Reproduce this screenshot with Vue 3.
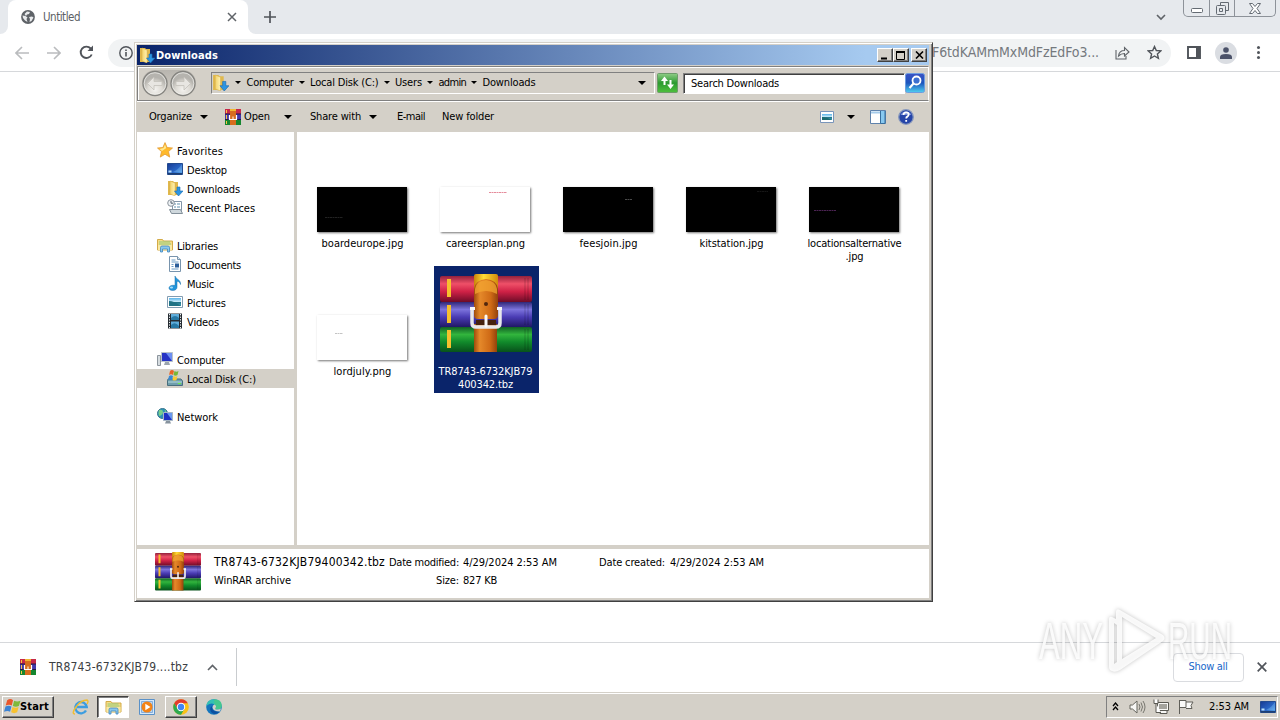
<template>
  <div class="screen">
    <svg class="defs" width="0" height="0" aria-hidden="true">
      <defs>
        <linearGradient id="gRed" x2="0" y2="1"><stop offset="0" stop-color="#93213c" /><stop offset=".3" stop-color="#ef5068" /><stop offset=".6" stop-color="#cf2146" /><stop offset="1" stop-color="#6d0c28" /></linearGradient>
        <linearGradient id="gBlue" x2="0" y2="1"><stop offset="0" stop-color="#302878" /><stop offset=".3" stop-color="#7c73dc" /><stop offset=".6" stop-color="#4a3cb4" /><stop offset="1" stop-color="#211766" /></linearGradient>
        <linearGradient id="gGreen" x2="0" y2="1"><stop offset="0" stop-color="#125f25" /><stop offset=".3" stop-color="#32b53d" /><stop offset=".6" stop-color="#118a2b" /><stop offset="1" stop-color="#08511b" /></linearGradient>
        <linearGradient id="gBelt"><stop offset="0" stop-color="#a04c0c" /><stop offset=".25" stop-color="#e5892a" /><stop offset=".7" stop-color="#cf6a16" /><stop offset="1" stop-color="#93420c" /></linearGradient>
        <linearGradient id="gGold"><stop offset="0" stop-color="#c98309" /><stop offset=".4" stop-color="#ffdc36" /><stop offset="1" stop-color="#d18a0c" /></linearGradient>
        <linearGradient id="gScreen" x2="1" y2="1"><stop offset="0" stop-color="#173a92" /><stop offset=".6" stop-color="#2a68c8" /><stop offset="1" stop-color="#64b5f3" /></linearGradient>
        <linearGradient id="gFolder"><stop offset="0" stop-color="#f2d36b" /><stop offset="1" stop-color="#fff2b4" /></linearGradient>
        <linearGradient id="gSky" x2="0" y2="1"><stop offset="0" stop-color="#5ab4ea" /><stop offset=".5" stop-color="#d3f0fa" /><stop offset=".55" stop-color="#25758a" /><stop offset="1" stop-color="#3fa2b7" /></linearGradient>
        <linearGradient id="gGo" x2="0" y2="1"><stop offset="0" stop-color="#3a52c4" /><stop offset=".5" stop-color="#1d55bd" /><stop offset="1" stop-color="#4fd0f0" /></linearGradient>
        <linearGradient id="gRefresh" x2="0" y2="1"><stop offset="0" stop-color="#8fcd86" /><stop offset=".5" stop-color="#2c9a30" /><stop offset="1" stop-color="#4fc03d" /></linearGradient>
        <radialGradient id="gNav" cy=".75"><stop offset="0" stop-color="#f4f3f0" /><stop offset=".6" stop-color="#dddad4" /><stop offset="1" stop-color="#b5b3ae" /></radialGradient>
      </defs>

      <symbol id="rar" viewBox="0 0 92 79" preserveAspectRatio="none">
        <rect y="2" width="92" height="26" rx="2" fill="url(#gRed)" />
        <rect y="28" width="92" height="25" rx="2" fill="url(#gBlue)" />
        <rect y="53" width="92" height="25" rx="2" fill="url(#gGreen)" />
        <path d="M7 5h4v18H7zM7 31h4v18H7zM7 56h4v18H7z" fill="#f7c02d" />
        <path d="M85 4v22M88 4v22M85 30v21M88 30v21M85 55v21M88 55v21" stroke="#000" stroke-opacity=".2" />
        <path d="M34 50h23v28H34z" fill="url(#gBelt)" />
        <path d="M34 2q0-2 2-2h20q2 0 2 2v17H34z" fill="url(#gGold)" />
        <path d="M34 15q1-9 12-10 11 1 12 10v26q0 4-4 4H38q-4 0-4-4z" fill="url(#gBelt)" />
        <path d="M35 15q1-8 11-9 10 1 11 9v5q-11-6-22 0z" fill="#f3a531" opacity=".75" />
        <circle cx="46" cy="30" r="2" fill="#52270d" />
        <path d="M36 46h20v5H36z" fill="#46220d" />
        <path d="M32 34v15q0 4 4 4h20q4 0 4-4V34" fill="none" stroke="#e8e8ea" stroke-width="3.500" />
        <path d="M30 34.500h5M57 34.500h5" stroke="#f8f8f8" stroke-width="3" />
        <path d="M46 42v10" stroke="#f8f8f8" stroke-width="3" stroke-linecap="round" />
      </symbol>
      <symbol id="rarSmall" viewBox="0 0 16 16">
        <path d="M0 0h16v5H0z" fill="#c72848" /><path d="M0 5h16v6H0z" fill="#4338a8" /><path d="M0 11h16v5H0z" fill="#16862f" />
        <path d="M1 1h1v3H1zM1 6h1v4H1zM1 12h1v3H1z" fill="#f8c545" />
        <path d="M5 0h6v16H5z" fill="#d76c1d" /><path d="M5 0h6v2H5z" fill="#f2b632" />
        <path d="M0 5h5M11 5h5M0 10.500h5M11 10.500h5" stroke="#241747" />
        <path d="M4.500 6v4.500h7V6" fill="none" stroke="#fff" stroke-width="1.200" /><path d="M8 7.500V10" stroke="#fff" />
      </symbol>
      <symbol id="downloads" viewBox="0 0 16 16">
        <path d="M1 1h5l1 1h4v13H1z" fill="#e0b84c" /><path d="M3 1l5 2v13l-5-2z" fill="url(#gFolder)" stroke="#d5ae4b" stroke-width=".5" />
        <path d="M10 7h3v4h3l-4.500 5L7.500 11H10z" fill="#2c95e2" stroke="#1b6bb1" stroke-width=".6" />
      </symbol>
      <symbol id="star" viewBox="0 0 16 16">
        <path d="M8 .6l2.100 4.900 5.400.5-4 3.600 1.200 5.500L8 12.200l-4.700 2.900 1.200-5.500L.5 6l5.400-.5z" fill="#ffb92a" stroke="#e39a35" stroke-width=".8" />
        <path d="M8 2.500L9.300 6 5 9 2.500 7 6.500 6z" fill="#ffe98f" />
      </symbol>
      <symbol id="desktop" viewBox="0 0 16 16">
        <path d="M.5 2.500h15v11H.5z" fill="url(#gScreen)" stroke="#234b8f" /><path d="M1 12h14v1.500H1z" fill="#1d3f73" /><path d="M1.500 9.500h3v2h-3z" fill="#b9dff8" />
        <path d="M6 11Q11 9 15 3v8z" fill="#8ccaf5" opacity=".35" />
      </symbol>
      <symbol id="recent" viewBox="0 0 16 16">
        <path d="M5.500 2.500h9v9h-9z" fill="#fff" stroke="#8295a8" /><path d="M7 5h2M10 5h3M7 8h2M10 8h3" stroke="#5d8fae" />
        <circle cx="4" cy="4" r="3.300" fill="#eef2f5" stroke="#8b949d" /><path d="M4 2v2.200h2" fill="none" stroke="#4f5d6b" />
        <path d="M2.500 10.500l2 4h11l-2-4z" fill="#cfd8dd" stroke="#83909a" />
      </symbol>
      <symbol id="libraries" viewBox="0 0 16 16">
        <path d="M.5 2.500h5l1 1.500h9v9H.5z" fill="#f6dc85" stroke="#d3ab49" /><path d="M2 5h11M2 7h12" stroke="#8fc97c" />
        <path d="M1 8h14v5H1z" fill="#fae9a5" /><path d="M3.500 15v-4.500Q3.500 9 5 9h6q1.500 0 1.500 1.500V15h-2v-3h-5v3z" fill="#8ac7ed" stroke="#3d87bf" stroke-width=".8" />
      </symbol>
      <symbol id="documents" viewBox="0 0 16 16">
        <path d="M2.500.5h8l3 3v12h-11z" fill="#fff" stroke="#7894ad" /><path d="M10.500.5v3h3" fill="#d7e6f0" stroke="#7894ad" />
        <path d="M4.500 4h4M4.500 6h7M4.500 8.500h2M4.500 10.500h2M4.500 13h7" stroke="#689bc6" /><path d="M8 7.500h4v4H8z" fill="#2b5d99" />
      </symbol>
      <symbol id="music" viewBox="0 0 16 16">
        <path d="M8 1c1 3.500 6 3.500 5.500 8.500-.5-2.500-2-3-3.500-3.300V12c0 2-1.500 3.500-4.300 3.500C3.400 15.500 2 14.500 2 13c0-2 3-3.300 6-2.500V1z" fill="#2295dc" stroke="#176fa9" stroke-width=".5" />
        <ellipse cx="4.500" cy="12.500" rx="1.600" ry="1" fill="#a7def8" />
      </symbol>
      <symbol id="pictures" viewBox="0 0 16 16">
        <path d="M.5 2.500h15v11H.5z" fill="#fff" stroke="#829cb1" /><path d="M2 4h12v8H2z" fill="url(#gSky)" /><path d="M2 7q5 0 12 5H2z" fill="#207385" />
      </symbol>
      <symbol id="videos" viewBox="0 0 16 16">
        <path d="M1 .5h14v15H1z" fill="#252b31" /><path d="M4 1h8v6H4zM4 8.500h8V15H4z" fill="#5faddb" />
        <path d="M2.500 1v15M13.500 1v15" stroke="#eef4f7" stroke-dasharray="1.300 1.300" /><path d="M4 5q4-4 8 0v2H4zM4 12q4-4 8 1v2H4z" fill="#2778a4" />
      </symbol>
      <symbol id="computer" viewBox="0 0 16 16">
        <path d="M.5 4.500h3v10h-3z" fill="#d6dce0" stroke="#8c959d" /><path d="M4.500 1.500h11v9h-11z" fill="#2633c5" stroke="#b9c2ca" />
        <path d="M9 2h6v8z" fill="#6d8ff2" /><path d="M8 11h4l1 3H7z" fill="#9ba5ad" />
      </symbol>
      <symbol id="disk" viewBox="0 0 16 16">
        <path d="M1 9h13l1.500 2v4.500H.5V11z" fill="#6f9eac" stroke="#476e7d" /><path d="M1 12h14" stroke="#b7dbdf" /><path d="M11 13.500h3" stroke="#68f23c" />
        <path d="M3 1q2-2 4 0L6 5Q4 3.500 2 5z" fill="#ea6527" /><path d="M7.500 1q2 1.500 4 0l-1 4q-2 1.500-4 0z" fill="#78b736" />
        <path d="M2 6q2-1.500 4 0l-1 4q-2-1-4 0z" fill="#3988d4" /><path d="M6.500 6q2 1.500 4 0l-1 4q-2 1-4 0z" fill="#f9cb32" />
      </symbol>
      <symbol id="network" viewBox="0 0 16 16">
        <circle cx="5.500" cy="5.500" r="5" fill="#2d91b8" stroke="#35738c" /><path d="M2 2q4-1 4 2T2 8q-1-3 0-6zM8 1q-1 3 2 5" fill="#78d08b" />
        <path d="M6.500 4.500h9v8h-9z" fill="#2031c4" stroke="#a7b6c4" /><path d="M10 5h5v7z" fill="#6998ef" /><path d="M9 13h4l1 2.500H8z" fill="#87939e" />
      </symbol>
      <symbol id="windows" viewBox="0 0 16 16">
        <path d="M3 2q3-2 5.500 0L7.300 7Q5 5.500 1.600 7z" fill="#e9572b" /><path d="M9.500 2.500q3 1.500 6 0L14 7.500q-3 1.500-5.700 0z" fill="#7fb93a" />
        <path d="M1.400 8q3-1.500 5.600 0L5.700 13Q3.500 11.500 0 13z" fill="#3b83d3" /><path d="M8 8.500q3 1.500 5.700 0l-1.300 5q-3 1.500-5.700 0z" fill="#f8c22f" />
      </symbol>
    </svg>

    <section class="browser">
      <header class="tabstrip">
        <i class="edge left"></i>
        <div class="tab">
          <svg width="14" height="14" viewBox="0 0 14 14"><circle cx="7" cy="7" r="6.900" fill="#5f6368" /><path d="M1.500 5.500l3 .5 2 1.500-1 1.500 1 3-2.500-1.500-2-2.500zM6 1.500l3 .5-1 2-2 .5-1 1.500-1.500-2zM8 7l3-.5 1.500 1-2 3.500-2 1 .5-3z" fill="#e9ebed" /></svg>
          <span v-fit="37" class="tab-title">Untitled</span>
          <svg class="tab-close" width="10" height="10" viewBox="0 0 10 10"><path d="M1 1l8 8M9 1L1 9" stroke="#5f6368" stroke-width="1.500" /></svg>
        </div>
        <i class="edge right"></i>
        <svg class="new-tab" width="12" height="12" viewBox="0 0 12 12"><path d="M6 0v12M0 6h12" stroke="#50545a" stroke-width="1.700" /></svg>
        <svg class="tab-search" width="10" height="7" viewBox="0 0 10 7"><path d="M1 1l4 4 4-4" fill="none" stroke="#5f6368" stroke-width="1.600" /></svg>
        <div class="caption">
          <i><svg width="12" height="5" viewBox="0 0 12 5"><rect x=".5" y=".5" width="11" height="4" rx="1" fill="#fff" stroke="#646b73" /></svg></i>
          <i><svg width="13" height="13" viewBox="0 0 13 13"><path d="M4.500 3.500v-3h8v8h-3M.5 4.500q0-1 1-1h7q1 0 1 1v7q0 1-1 1h-7q-1 0-1-1zM3.500 6.500h3v3h-3z" fill="none" stroke="#646b73" /></svg></i>
          <i><svg width="12" height="11" viewBox="0 0 12 11"><path d="M.5.500h3L6 3.500 8.500.5h3L8 5.500l3.500 5h-3L6 7.500l-2.500 3h-3l3.500-5z" fill="#fff" stroke="#646b73" /></svg></i>
        </div>
      </header>
      <div class="toolbar">
        <svg width="14" height="14" viewBox="0 0 14 14"><path d="M14 7H1M7 1L1 7l6 6" fill="none" stroke="#babcbe" stroke-width="1.600" /></svg>
        <svg width="14" height="14" viewBox="0 0 14 14"><path d="M0 7h13M7 1l6 6-6 6" fill="none" stroke="#babcbe" stroke-width="1.600" /></svg>
        <svg width="15" height="15" viewBox="0 0 15 15"><path d="M12.700 9.500A5.700 5.700 0 1 1 11.700 3.500L13 5" fill="none" stroke="#50545a" stroke-width="1.900" /><path d="M14 .5V6H8.500z" fill="#50545a" /></svg>
        <div class="omnibox">
          <svg width="14" height="14" viewBox="0 0 14 14"><circle cx="7" cy="7" r="6.200" fill="none" stroke="#50545a" stroke-width="1.400" /><path d="M7 6v4.500M7 3.500V5" stroke="#50545a" stroke-width="1.600" /></svg>
          <span v-fit="167" class="url">F6tdKAMmMxMdFzEdFo3...</span>
          <svg width="15" height="14" viewBox="0 0 15 14"><path d="M1 4v9h10v-3M3.500 10C4 6 6 4.500 9.500 4.500V1.500L14 6 9.500 10V7.500Q6 7.500 3.500 10z" fill="none" stroke="#5f6368" stroke-width="1.100" /></svg>
          <svg class="bookmark" width="15" height="15" viewBox="0 0 15 15"><path d="M7.500 1.500l1.800 4 4.500.4-3.400 3 1 4.400-3.900-2.300-3.900 2.300 1-4.400-3.400-3 4.500-.4z" fill="none" stroke="#50545a" stroke-width="1.400" /></svg>
        </div>
        <svg class="panel" width="14" height="13" viewBox="0 0 14 13"><path d="M1 1h12v11H1z" fill="none" stroke="#50545a" stroke-width="1.900" /><path d="M9 1h4v11H9z" fill="#50545a" /></svg>
        <i class="avatar"><svg width="12" height="12" viewBox="0 0 12 12"><circle cx="6" cy="3" r="2.800" fill="#4b5269" /><path d="M0 12v-2q0-3 6-3t6 3v2z" fill="#4b5269" /></svg></i>
        <i class="kebab"></i>
      </div>
      <main class="page"></main>
      <footer class="shelf">
        <svg width="16" height="16"><use href="#rarSmall" /></svg>
        <span v-fit="139" class="shelf-name">TR8743-6732KJB79....tbz</span>
        <svg class="shelf-up" width="11" height="7" viewBox="0 0 11 7"><path d="M1 6l4.500-4.500L10 6" fill="none" stroke="#5f6368" stroke-width="1.600" /></svg>
        <i class="shelf-sep"></i>
        <button class="show-all"><span v-fit="39">Show all</span></button>
        <svg width="10" height="10" viewBox="0 0 10 10"><path d="M.7.700l8.600 8.600M9.300.700L.700 9.300" stroke="#50545a" stroke-width="1.700" /></svg>
      </footer>
    </section>

    <section class="window">
      <header class="titlebar">
        <svg width="16" height="16"><use href="#downloads" /></svg>
        <strong v-fit="62">Downloads</strong>
        <div class="win-buttons">
          <i><svg width="10" height="9" viewBox="0 0 10 9"><path d="M1 7.500h6" stroke="#000" stroke-width="2" /></svg></i>
          <i><svg width="10" height="9" viewBox="0 0 10 9"><path d="M.5 1v7.500h8V1M0 1h9" fill="none" stroke="#000" /><path d="M0 1h9" stroke="#000" stroke-width="2" /></svg></i>
          <i class="x"><svg width="9" height="8" viewBox="0 0 9 8"><path d="M1 .5l7 7M8 .5l-7 7" stroke="#000" stroke-width="1.600" /></svg></i>
        </div>
      </header>

      <nav class="navbar">
        <div class="travel">
          <svg v-for="dir in ['back', 'forward']" :key="dir" :class="dir" width="26" height="27" viewBox="0 0 26 27">
            <circle cx="13" cy="13.500" r="12" fill="url(#gNav)" stroke="#84837f" stroke-width="1.300" />
            <circle cx="13" cy="13.500" r="10.800" fill="none" stroke="#f4f3f0" stroke-width=".7" />
            <path d="M12 7l-6.500 6.500L12 20v-4.500h8v-4h-8z" fill="#e8e6e2" stroke="#c4c1bb" stroke-width=".8" />
          </svg>
        </div>
        <div class="address">
          <svg width="17" height="17"><use href="#downloads" /></svg>
          <template v-for="crumb in crumbs" :key="crumb.text">
            <i class="arrow small"></i><span v-fit="crumb.width">{{ crumb.text }}</span>
          </template>
          <i class="arrow end"></i>
        </div>
        <svg class="refresh" width="21" height="20" viewBox="0 0 21 20">
          <rect x=".5" y=".5" width="20" height="19" rx="1" fill="url(#gRefresh)" stroke="#6d9b6a" />
          <path d="M6.500 12V8H4l3.500-4.500L11 8H8.500v4zM12.500 7v4.500H10l3.500 4.500 3.500-4.500h-2.500V7z" fill="#fff" />
        </svg>
        <div class="search"><span v-fit="88">Search Downloads</span></div>
        <svg class="go" width="20" height="20" viewBox="0 0 20 20">
          <rect x=".5" y=".5" width="19" height="19" rx="2" fill="url(#gGo)" stroke="#6d9ce0" />
          <circle cx="11.500" cy="7.500" r="4" fill="#3d6fd0" stroke="#fff" stroke-width="1.800" /><path d="M8.500 10.500L4.500 15" stroke="#fff" stroke-width="2.200" />
        </svg>
      </nav>

      <div class="commands">
        <span v-fit="43">Organize</span><i class="arrow"></i>
        <svg class="cmd-rar" width="16" height="16"><use href="#rarSmall" /></svg>
        <span v-fit="26">Open</span><i class="arrow wide"></i>
        <span v-fit="51" class="share">Share with</span><i class="arrow"></i>
        <span v-fit="28" class="email">E-mail</span>
        <span v-fit="52" class="new-folder">New folder</span>
        <svg class="view" width="14" height="12" viewBox="0 0 14 12"><path d="M.5.500h13v11H.5z" fill="#fff" stroke="#7995ba" /><path d="M2 3h10v6H2z" fill="url(#gSky)" /><path d="M2 6q5 0 10 3H2z" fill="#1c6c70" /></svg>
        <i class="arrow view-arrow"></i>
        <svg class="pane" width="16" height="14" viewBox="0 0 16 14"><path d="M.5.500h15v13H.5z" fill="#fff" stroke="#5f82ac" /><path d="M1 2.500h14" stroke="#a5cbea" stroke-width="2" /><path d="M10.500 1v12.500h4.500V1" fill="#89c9f0" stroke="#376f9e" /></svg>
        <svg width="16" height="16" viewBox="0 0 16 16"><circle cx="8" cy="8" r="7.300" fill="#2645a8" stroke="#8798bd" stroke-width="1.300" /><path d="M2.500 6a6 6 0 0 1 11 0z" fill="#7890d9" /><path d="M5.500 6q0-2.700 2.600-2.700t2.600 2.300q0 1.200-1.400 2Q8.200 8.200 8.200 9.600M8.200 11v1.800" fill="none" stroke="#fff" stroke-width="1.800" /></svg>
      </div>

      <div class="body">
        <aside class="tree">
          <div v-for="(row, i) in tree" :key="i" class="row" :class="{ child: row.child, selected: row.selected }">
            <template v-if="row.text">
              <svg width="16" height="16"><use :href="'#' + row.icon" /></svg>
              <span v-fit="row.width">{{ row.text }}</span>
            </template>
          </div>
        </aside>
        <div class="files">
          <figure v-for="file in files" :key="file.lines[0]" :class="{ picked: file.archive }">
            <div class="preview">
              <svg v-if="file.archive" class="archive" width="92" height="79"><use href="#rar" /></svg>
              <div v-else class="thumb" :class="file.kind">
                <svg width="90" height="45" viewBox="0 0 90 45"><path :d="file.mark" :stroke="file.ink" stroke-dasharray="2 .5" /></svg>
              </div>
            </div>
            <figcaption>
              <div v-for="(line, i) in file.lines" :key="line"><span v-fit="file.widths[i]">{{ line }}</span></div>
            </figcaption>
          </figure>
        </div>
      </div>

      <footer class="details">
        <svg width="46" height="39"><use href="#rar" /></svg>
        <div class="col name">
          <div><span v-fit="171" class="big">TR8743-6732KJB79400342.tbz</span></div>
          <div><span v-fit="77">WinRAR archive</span></div>
        </div>
        <div class="col keys">
          <div><span v-fit="70">Date modified:</span></div>
          <div><span v-fit="23">Size:</span></div>
        </div>
        <div class="col values">
          <div><span v-fit="94">4/29/2024 2:53 AM</span></div>
          <div><span v-fit="34">827 KB</span></div>
        </div>
        <div class="col created"><div><span v-fit="66">Date created:</span></div></div>
        <div class="col"><div><span v-fit="94">4/29/2024 2:53 AM</span></div></div>
      </footer>
    </section>

    <svg class="watermark" width="210" height="76" viewBox="0 0 210 76">
      <g fill="#fff" fill-opacity=".85">
        <text x="9" y="55" textLength="64" lengthAdjust="spacingAndGlyphs">ANY</text>
        <text x="138" y="55" textLength="64" lengthAdjust="spacingAndGlyphs">RUN</text>
        <path fill-rule="evenodd" d="M79 15q0-3 3-2l4 2V8q0-4 4-2l43 25q3 3 0 6L90 66q-5 3-8 1-3-1-3-4zM84 19v41l3-2V21zM92 13v42l34-21z" />
      </g>
    </svg>

    <footer class="taskbar">
      <button class="start"><svg width="17" height="17"><use href="#windows" /></svg><strong v-fit="29">Start</strong></button>
      <div class="task">
        <svg width="17" height="16" viewBox="0 0 17 16"><path d="M14 11.500a5.700 5.700 0 1 1 .7-3.500H5" fill="none" stroke="#3c9de0" stroke-width="2.400" /><path d="M3 15Q-1 15 4 8T15 1q2 1 0 4" fill="none" stroke="#f0bd30" stroke-width="1.400" /></svg>
      </div>
      <div class="task active"><svg width="17" height="16"><use href="#libraries" /></svg></div>
      <div class="task">
        <svg width="16" height="16" viewBox="0 0 16 16"><path d="M.5.500h15v15H.5z" fill="#d5e9fa" stroke="#5a91c8" /><path d="M2.500 2.500h11v11h-11z" fill="#b8d7f2" stroke="#84addb" /><circle cx="8" cy="8" r="5.500" fill="#f38316" /><path d="M6.300 4.800v6.400L11.500 8z" fill="#fff" /></svg>
      </div>
      <div class="task open">
        <svg width="16" height="16" viewBox="0 0 16 16"><circle cx="8" cy="8" r="7.800" fill="#fbc116" /><path d="M1.200 4.200A7.800 7.800 0 0 1 14.800 4.200H8L4.700 10z" fill="#e33b2e" /><path d="M1.200 4.200A7.800 7.800 0 0 0 8 15.800L11.400 10H4.700z" fill="#2da94f" /><circle cx="8" cy="8" r="4.200" fill="#fff" /><circle cx="8" cy="8" r="3.200" fill="#4285f4" /></svg>
      </div>
      <div class="task">
        <svg width="16" height="16" viewBox="0 0 16 16"><circle cx="8" cy="8" r="7.800" fill="#1475bd" /><path d="M.3 7Q1 .200 8 .200q7.500 0 7.700 6.300 0 4-4.200 4-3 0-2-1.500Q11 7 8 5.200 4.500 3 .3 7z" fill="#35c0b4" /><path d="M8 .2q7.500 0 7.700 6.300 0 4-4.200 4-3 0-2-1.500 1-2-1-3.300z" fill="#50cd74" opacity=".6" /><path d="M6 7q-1 6 8 5.500Q9 17 5 13 3 9 6 7z" fill="#0c4fa0" /><path d="M9.500 9q1.500-2-1-3.500Q6.500 6 6.500 8.500q.5 4 7.500 4l1-3q-1.500 1-3.500 1-3 0-2-1.500z" fill="#d4d0c8" /></svg>
      </div>
      <div class="tray">
        <svg class="more" width="7" height="9" viewBox="0 0 7 9"><path d="M1 4l2.500-3L6 4M1 8l2.500-3L6 8" fill="none" stroke="#000" stroke-width="1.300" /></svg>
        <svg class="speaker" width="17" height="14" viewBox="0 0 17 14"><path d="M1 5h2.500L8 1v12L3.500 9H1z" fill="#f7f7f5" stroke="#67665f" /><path d="M10 4q2 3 0 6M12 2.500q3 4.500 0 9M14 1q4 6 0 12" fill="none" stroke="#77766f" /></svg>
        <svg class="net" width="17" height="15" viewBox="0 0 17 15"><path d="M4.500 3.500h11v8h-11zM7 12v2.500h7V12" fill="#f7f7f5" stroke="#5a5953" /><path d="M6 5h8v5H6z" fill="#a4a39d" /><path d="M1 .5v4h4v-4M3 4.500v9h5" fill="#fff" stroke="#5a5953" /></svg>
        <svg class="flag" width="16" height="15" viewBox="0 0 16 15"><path d="M1.500 15V1M2 1.500h6v7H2M8 3h7l-2 3.500 1 3H8" fill="#fafaf8" stroke="#605f59" /></svg>
        <span v-fit="40" class="clock">2:53 AM</span>
        <svg width="16" height="16"><use href="#desktop" /></svg>
      </div>
    </footer>
  </div>
</template>

<script setup>
// Spreads the letters of a label so it takes exactly the given width
const vFit = (el, { value }) => {
  el.style.letterSpacing = '0px'
  requestAnimationFrame(() => {
    const extra = value - el.getBoundingClientRect().width
    el.style.letterSpacing = extra / el.textContent.length + 'px'
  })
}

const crumbs = [
  { text: 'Computer', width: 47 },
  { text: 'Local Disk (C:)', width: 68.500 },
  { text: 'Users', width: 27 },
  { text: 'admin', width: 27.500 },
  { text: 'Downloads', width: 53 }
]

const tree = [
  { text: 'Favorites', icon: 'star', width: 46 },
  { text: 'Desktop', icon: 'desktop', width: 40, child: true },
  { text: 'Downloads', icon: 'downloads', width: 53, child: true },
  { text: 'Recent Places', icon: 'recent', width: 68, child: true },
  {},
  { text: 'Libraries', icon: 'libraries', width: 41 },
  { text: 'Documents', icon: 'documents', width: 54, child: true },
  { text: 'Music', icon: 'music', width: 27, child: true },
  { text: 'Pictures', icon: 'pictures', width: 39, child: true },
  { text: 'Videos', icon: 'videos', width: 32, child: true },
  {},
  { text: 'Computer', icon: 'computer', width: 48 },
  { text: 'Local Disk (C:)', icon: 'disk', width: 69, child: true, selected: true },
  {},
  { text: 'Network', icon: 'network', width: 41 }
]

const files = [
  { lines: ['boardeurope.jpg'], widths: [82], kind: 'dark', mark: 'M8 30.500h18', ink: '#222' },
  { lines: ['careersplan.png'], widths: [79], kind: 'light', mark: 'M49 5.500h18', ink: '#e58b9b' },
  { lines: ['feesjoin.jpg'], widths: [58], kind: 'dark', mark: 'M62 12.500h7', ink: '#4a4a4a' },
  { lines: ['kitstation.jpg'], widths: [64], kind: 'dark', mark: 'M71 4.500h11', ink: '#161616' },
  { lines: ['locationsalternative', '.jpg'], widths: [94, 18], kind: 'dark', mark: 'M5 23.500h22', ink: '#4b2352' },
  { lines: ['lordjuly.png'], widths: [58], kind: 'light', mark: 'M18 18.500h8', ink: '#c4c4c4' },
  { lines: ['TR8743-6732KJB79', '400342.tbz'], widths: [94, 55], archive: true }
]
</script>

<style>
body {
  overflow: hidden;
}
</style>

<style scoped>
* {
  box-sizing: border-box;
}

.screen {
  position: relative;
  width: 1280px;
  height: 720px;
  display: flex;
  flex-direction: column;
  overflow: hidden;
  background: #fff;
  color: #000;
  font: 11px/13px "DejaVu Sans Condensed", "DejaVu Sans", sans-serif;
  font-stretch: condensed;
  white-space: nowrap;
}

.defs {
  position: absolute;
}

svg {
  display: block;
  flex: none;
}

span,
strong {
  display: inline-block;
  flex: none;
}

i {
  display: block;
  flex: none;
}

button {
  font: inherit;
  padding: 0;
}

/* browser */
.browser {
  height: 692px;
  display: flex;
  flex-direction: column;
}

.tabstrip {
  height: 34px;
  display: flex;
  align-items: center;
  background: #e6e9ed;
}

.edge {
  width: 8px;
  height: 34px;
  background: #fff;
}

.edge::before {
  content: '';
  display: block;
  height: 34px;
  background: #e6e9ed;
}

.edge.left::before {
  border-bottom-right-radius: 8px;
}

.edge.right::before {
  border-bottom-left-radius: 8px;
}

.tab {
  width: 240px;
  height: 34px;
  padding: 0 11px 0 13px;
  display: flex;
  align-items: center;
  background: #fff;
  border-radius: 8px 8px 0 0;
}

.tab-title {
  margin-left: 8px;
  font-size: 11.5px;
  color: #5c6065;
}

.tab-close {
  margin-left: auto;
}

.new-tab {
  margin-left: 8px;
}

.tab-search {
  margin-left: auto;
}

.caption {
  align-self: flex-start;
  display: flex;
  height: 17px;
  margin: 0 4px 0 17px;
  border: 1px solid #8d9299;
  border-top: 0;
  border-radius: 0 0 5px 5px;
}

.caption i {
  display: flex;
  justify-content: center;
  align-items: center;
  width: 25px;
}

.caption i:first-child {
  padding-top: 5px;
}

.caption i + i {
  border-left: 1px solid #8d9299;
}

.caption i:last-child {
  width: 41px;
}

.toolbar {
  height: 38px;
  padding: 0 20px 0 15px;
  display: flex;
  align-items: center;
  border-bottom: 1px solid #d6d8db;
}

.toolbar > svg + svg {
  margin-left: 18px;
}

.omnibox {
  width: 1063px;
  height: 28px;
  margin-left: 14px;
  padding: 0 9px 0 11px;
  display: flex;
  align-items: center;
  background: #f1f3f4;
  border-radius: 14px;
}

.url {
  margin-left: auto;
  margin-right: 16px;
  font-size: 14px;
  color: #75797e;
}

.bookmark {
  margin-left: 17px;
}

.toolbar .panel {
  margin-left: 16px;
}

.avatar {
  width: 22px;
  height: 22px;
  margin-left: 14px;
  display: flex;
  align-items: center;
  justify-content: center;
  border-radius: 50%;
  background: #dadde2;
}

.kebab {
  width: 3px;
  height: 3px;
  margin-left: 20px;
  border-radius: 50%;
  background: #50545a;
  box-shadow: 0 -5px #50545a, 0 5px #50545a;
}

.page {
  flex: 1;
}

.shelf {
  height: 50px;
  padding: 0 13px 1px 20px;
  display: flex;
  align-items: center;
  border-top: 1px solid #d6d8db;
}

.shelf-name {
  margin-left: 13px;
  font-size: 12px;
  color: #3c4043;
}

.shelf-up {
  margin-left: 19px;
}

.shelf-sep {
  width: 1px;
  height: 38px;
  margin-left: 18px;
  background: #c9cccf;
}

.show-all {
  width: 71px;
  height: 29px;
  margin: 0 13px 0 auto;
  padding: 0 1px 1px 0;
  border: 1px solid #dadce0;
  border-radius: 4px;
  background: #fff;
  color: #1967c9;
}

/* explorer window */
.window {
  position: absolute;
  left: 134px;
  top: 42px;
  width: 799px;
  height: 560px;
  display: flex;
  flex-direction: column;
  padding: 2px 3px 2px 2px;
  background: #d4d0c8;
  border: 1px solid;
  border-color: #d4d0c8 #404040 #404040 #d4d0c8;
  box-shadow: inset 1px 1px #fff, inset -1px -1px #808080;
}

.titlebar {
  height: 20px;
  padding: 0 2px;
  display: flex;
  align-items: center;
  background: linear-gradient(90deg, #0a246a, #a6caf0 92%);
  color: #fff;
}

.titlebar strong {
  margin-left: 1px;
}

.win-buttons {
  display: flex;
  margin-left: auto;
}

.win-buttons i {
  width: 16px;
  height: 14px;
  display: flex;
  align-items: center;
  justify-content: center;
  background: #d4d0c8;
  border: 1px solid;
  border-color: #fff #404040 #404040 #fff;
  box-shadow: inset -1px -1px #808080;
}

.win-buttons .x {
  margin-left: 2px;
}

.navbar {
  height: 35px;
  margin-top: 1px;
  display: flex;
  align-items: center;
  padding: 0 0 1px 4px;
  border: 1px solid;
  border-color: #808080 #fff #808080 #808080;
  box-shadow: inset 1px 1px #fff, 0 1px #fff;
}

.travel {
  display: flex;
  gap: 2px;
  background: linear-gradient(#b8b5af, #d4d0c8);
  border-radius: 13px;
}

.forward {
  transform: scaleX(-1);
}

.address {
  width: 444px;
  height: 22px;
  margin-left: 15px;
  padding-bottom: 1px;
  display: flex;
  align-items: center;
  border: 1px solid;
  border-color: #808080 #fff #fff #808080;
}

.arrow {
  width: 0;
  height: 0;
  margin: 0 7px 0 8px;
  border: 4px solid transparent;
  border-top-color: #000;
  border-bottom: 0;
}

.arrow.small {
  margin: 0 5.500px 0 5px;
  border-width: 3px 3px 0;
}

.address svg + .arrow.small {
  margin-left: 6px;
}

.arrow.end {
  margin: 0 8px 0 auto;
}

.refresh {
  margin-left: 2px;
}

.search {
  width: 222px;
  height: 21px;
  margin-left: 5px;
  padding: 3px 6px 0 7px;
  background: #fff;
  border: 1px solid;
  border-color: #808080 #fff #fff #808080;
  box-shadow: inset 1px 1px #404040;
}

.commands {
  height: 31px;
  padding: 0 15px 0 12px;
  display: flex;
  align-items: center;
}

.cmd-rar {
  margin: 0 3px 0 10px;
}

.arrow.wide {
  margin-left: 14px;
}

.share {
  margin-left: 11px;
}

.email {
  margin-left: 13px;
}

.new-folder {
  margin-left: 17px;
}

.view {
  margin-left: auto;
}

.arrow.view-arrow {
  margin: 0 15px 0 13px;
}

.pane {
  margin-right: 12px;
}

.body {
  height: 413px;
  display: flex;
}

.tree {
  width: 157px;
  padding-top: 9px;
  background: #fff;
}

.row {
  height: 19px;
  padding-left: 20px;
  display: flex;
  align-items: center;
  gap: 4px;
}

.row svg {
  margin-bottom: 1px;
}

.row span {
  margin-top: 1px;
}

.row.child {
  padding-left: 30px;
}

.row.selected {
  background: #d4d0c8;
}

.files {
  flex: 1;
  margin-left: 3px;
  padding: 6px 0 0 14px;
  display: grid;
  grid-template-columns: repeat(5, 105px);
  grid-auto-rows: 127px;
  gap: 1px 18px;
  align-content: start;
  background: #fff;
}

figure {
  margin: 0;
  height: 127px;
  padding-right: 2px;
}

.picked {
  background: #0a246a;
  color: #fff;
}

.preview {
  height: 99px;
  padding-bottom: 5px;
  display: flex;
  align-items: flex-end;
  justify-content: center;
}

.archive {
  margin-bottom: 7px;
}

.thumb {
  margin-right: 2px;
  box-shadow: 1px 1px 2px rgba(0, 0, 0, 0.55);
}

.dark {
  background: #000;
}

.light {
  background: #fff;
}

figcaption {
  text-align: center;
}

.details {
  height: 49px;
  margin-top: 4px;
  padding: 3px 0 0 18px;
  display: flex;
  background: #fff;
}

.col {
  padding-top: 1px;
  line-height: 18px;
}

.col + .col {
  padding-top: 2px;
}

.name {
  margin-left: 13px;
}

.big {
  font-size: 12px;
}

.keys {
  margin-left: 4px;
  text-align: right;
}

.values {
  margin-left: 4px;
}

.created {
  margin: 0 5px 0 42px;
}

.watermark {
  position: absolute;
  left: 1030px;
  top: 604px;
  overflow: visible;
  filter: drop-shadow(0 0 2px rgba(0, 0, 0, 0.28));
  font: 400 51px "Liberation Sans Narrow", "Liberation Sans", sans-serif;
  pointer-events: none;
}

/* taskbar */
.taskbar {
  height: 28px;
  padding: 3px 2px 2px;
  display: flex;
  align-items: center;
  background: #d4d0c8;
  box-shadow: inset 0 1px #d4d0c8, inset 0 2px #fff;
}

.start {
  width: 52px;
  height: 22px;
  padding-left: 1px;
  display: flex;
  align-items: center;
  background: #d4d0c8;
  border: 1px solid;
  border-color: #fff #404040 #404040 #fff;
  box-shadow: inset -1px -1px #808080;
  margin-right: 9px;
}

.start strong {
  margin-left: -1px;
}

.task {
  width: 34px;
  height: 22px;
  display: flex;
  align-items: center;
  justify-content: center;
}

.task.active,
.task.open {
  width: 32px;
  border: 1px solid;
}

.task.active {
  margin-right: 1px;
  background: #fff;
  border-color: #404040 #fff #fff #404040;
  box-shadow: inset 1px 1px #808080;
}

.task.open {
  margin-left: 1px;
  border-color: #fff #404040 #404040 #fff;
  box-shadow: inset -1px -1px #808080;
}

.tray {
  width: 172px;
  height: 22px;
  margin-left: auto;
  padding: 0 1px 0 5px;
  display: flex;
  align-items: center;
  border: 1px solid;
  border-color: #808080 #fff #fff #808080;
}

.speaker {
  margin-left: 10px;
}

.net {
  margin-left: 7px;
}

.flag {
  margin-left: 8px;
}

.clock {
  margin: 0 11px 0 auto;
}
</style>
